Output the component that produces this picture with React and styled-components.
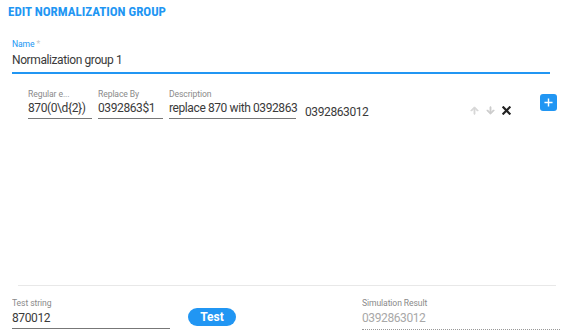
import React from "react";
import styled, { createGlobalStyle } from "styled-components";

const GlobalStyle = createGlobalStyle`
  html, body {
    margin: 0;
    padding: 0;
    background: #fff;
    font-family: Roboto, "Liberation Sans", sans-serif;
  }
`;

const Page = styled.div`
  width: 568px;
  height: 336px;
  display: flex;
  flex-direction: column;
  box-sizing: border-box;
  padding: 5px 8px 0 12px;
  overflow: hidden;
`;

const Title = styled.div`
  margin-left: -4px;
  font-size: 13px;
  font-weight: 700;
  font-stretch: 87%;
  color: #2196f3;
  line-height: 14px;
`;

const NameField = styled.div`
  margin-top: 20px;
  margin-right: 10px;
  display: flex;
  flex-direction: column;
  gap: 2px;
  border-bottom: 2px solid #2196f3;
  padding-bottom: 4px;
`;

const Label = styled.div`
  font-size: 8.6px;
  line-height: 11px;
  letter-spacing: -0.1px;
  color: ${(p) => (p.$active ? "#2196f3" : "#8a8a8a")};
  white-space: nowrap;
  overflow: hidden;
  text-overflow: ellipsis;
`;

const Star = styled.span`
  color: #c8c8c8;
  margin-left: 2px;
`;

const Value = styled.div`
  font-size: 12px;
  line-height: 16px;
  letter-spacing: -0.4px;
  color: ${(p) => (p.$muted ? "#a8a8a8" : "#3a3a3a")};
  white-space: nowrap;
`;

const RuleRow = styled.div`
  margin-top: 11px;
  display: flex;
  align-items: flex-start;
  padding-left: 16px;
`;

const Field = styled.div`
  width: ${(p) => p.$w}px;
  margin-right: ${(p) => p.$mr ?? 6}px;
  display: flex;
  flex-direction: column;
  padding-top: 4px;
  border-bottom: 1px solid #777;
  padding-bottom: 2px;
  flex-shrink: 0;
`;

const Result = styled(Value)`
  margin-top: 19px;
  margin-left: 3px;
  width: 164px;
  flex-shrink: 0;
`;

const Actions = styled.div`
  margin-top: 20px;
  display: flex;
  align-items: center;
  gap: 5px;
  flex-shrink: 0;
`;

const IconBtn = styled.span`
  display: inline-flex;
  width: 11px;
  height: 11px;
  align-items: center;
  justify-content: center;
`;

const AddButton = styled.button`
  margin-left: 28px;
  margin-top: 9px;
  width: 17px;
  height: 17px;
  border: none;
  border-radius: 3px;
  background: #2196f3;
  padding: 0;
  display: flex;
  align-items: center;
  justify-content: center;
  flex-shrink: 0;
`;

const Spacer = styled.div`
  flex: 1;
`;

const Divider = styled.div`
  margin-left: 6px;
  margin-right: 4px;
  height: 1px;
  background: #e8e8e8;
`;

const TestRow = styled.div`
  display: flex;
  align-items: flex-start;
  margin-top: 12px;
  height: 38px;
`;

const TestField = styled.div`
  width: 158px;
  flex-shrink: 0;
  display: flex;
  flex-direction: column;
  gap: 1px;
  border-bottom: 1px solid #777;
  padding-bottom: 2px;
`;

const TestButton = styled.button`
  margin-left: 18px;
  margin-top: 10px;
  width: 48px;
  height: 18px;
  flex-shrink: 0;
  border: none;
  border-radius: 9px;
  background: #2196f3;
  color: #fff;
  font-family: Roboto, "Liberation Sans", sans-serif;
  font-weight: 700;
  font-stretch: 88%;
  font-size: 12px;
  padding: 0;
`;

const SimField = styled.div`
  margin-left: 126px;
  width: 198px;
  flex-shrink: 0;
  display: flex;
  flex-direction: column;
  gap: 1px;
  border-bottom: 1px dotted #999;
  padding-bottom: 3px;
`;

const ArrowUp = ({ color }) => (
  <svg width="11" height="11" viewBox="0 0 24 24">
    <path d="M4 12l1.41 1.41L11 7.83V20h2V7.83l5.58 5.59L20 12l-8-8-8 8z" fill={color} stroke={color} strokeWidth="2" />
  </svg>
);

const ArrowDown = ({ color }) => (
  <svg width="11" height="11" viewBox="0 0 24 24">
    <path d="M20 12l-1.41-1.41L13 16.17V4h-2v12.17l-5.58-5.59L4 12l8 8 8-8z" fill={color} stroke={color} strokeWidth="2" />
  </svg>
);

const Cross = () => (
  <svg width="9" height="9" viewBox="0 0 10 10">
    <path d="M1.5 1.5l7 7M8.5 1.5l-7 7" stroke="#222" strokeWidth="2.4" strokeLinecap="square" />
  </svg>
);

const Plus = () => (
  <svg width="9" height="9" viewBox="0 0 10 10">
    <path d="M5 0.5v9M0.5 5h9" stroke="#fff" strokeWidth="1.6" />
  </svg>
);

export default function App() {
  return (
    <Page>
      <GlobalStyle />
      <Title>EDIT NORMALIZATION GROUP</Title>
      <NameField>
        <Label $active>
          Name<Star>*</Star>
        </Label>
        <Value>Normalization group 1</Value>
      </NameField>

      <RuleRow>
        <Field $w={64}>
          <Label>Regular e...</Label>
          <Value>{"870(0\\d{2})"}</Value>
        </Field>
        <Field $w={65}>
          <Label>Replace By</Label>
          <Value>0392863$1</Value>
        </Field>
        <Field $w={127} $mr={6}>
          <Label>Description</Label>
          <Value>replace 870 with 0392863</Value>
        </Field>
        <Result>0392863012</Result>
        <Actions>
          <IconBtn>
            <ArrowUp color="#d6d6d6" />
          </IconBtn>
          <IconBtn>
            <ArrowDown color="#cacaca" />
          </IconBtn>
          <IconBtn>
            <Cross />
          </IconBtn>
        </Actions>
        <AddButton>
          <Plus />
        </AddButton>
      </RuleRow>

      <Spacer />
      <Divider />
      <TestRow>
        <TestField>
          <Label>Test string</Label>
          <Value>870012</Value>
        </TestField>
        <TestButton>Test</TestButton>
        <SimField>
          <Label>Simulation Result</Label>
          <Value $muted>0392863012</Value>
        </SimField>
      </TestRow>
    </Page>
  );
}
